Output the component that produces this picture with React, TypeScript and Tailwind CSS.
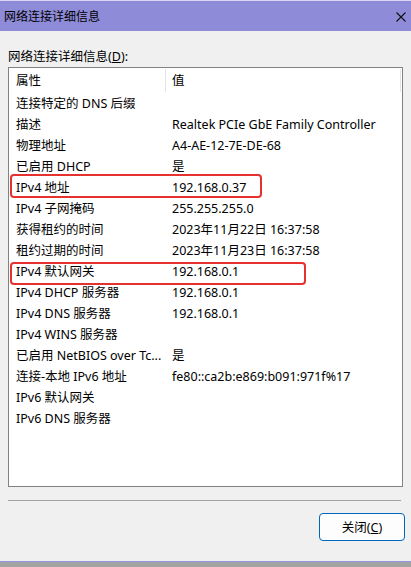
import React from "react";

const rows: [string, string][] = [
  ["连接特定的 DNS 后缀", ""],
  ["描述", "Realtek PCIe GbE Family Controller"],
  ["物理地址", "A4-AE-12-7E-DE-68"],
  ["已启用 DHCP", "是"],
  ["IPv4 地址", "192.168.0.37"],
  ["IPv4 子网掩码", "255.255.255.0"],
  ["获得租约的时间", "2023年11月22日 16:37:58"],
  ["租约过期的时间", "2023年11月23日 16:37:58"],
  ["IPv4 默认网关", "192.168.0.1"],
  ["IPv4 DHCP 服务器", "192.168.0.1"],
  ["IPv4 DNS 服务器", "192.168.0.1"],
  ["IPv4 WINS 服务器", ""],
  ["已启用 NetBIOS over Tc...", "是"],
  ["连接-本地 IPv6 地址", "fe80::ca2b:e869:b091:971f%17"],
  ["IPv6 默认网关", ""],
  ["IPv6 DNS 服务器", ""],
];

export default function App() {
  return (
    <div
      className="w-[411px] h-[567px] bg-[#a3a3a3] text-black text-[12px] overflow-hidden"
      style={{ fontFamily: '"Noto Sans", "Noto Sans CJK SC", sans-serif' }}
    >
      <div className="h-[562px] flex flex-col bg-[#f0f0f0] border-b border-[#9a95e2]">
        {/* title bar */}
        <div className="h-[31px] shrink-0 bg-[#8e8bd8] border-t border-[#d8d6f0] flex items-center justify-between pl-[4px] pr-[5px]">
          <span className="leading-[16px] pt-[2px]">网络连接详细信息</span>
          <svg width="10" height="10" viewBox="0 0 10 10" className="mt-[1px]">
            <path d="M0.5 0.5 L9.5 9.5 M9.5 0.5 L0.5 9.5" stroke="#111" strokeWidth="1.1" />
          </svg>
        </div>

        <div className="flex flex-col px-[8px] pt-[17px]">
          <div className="leading-[16px] h-[19px] pt-[1px] text-[12.5px]">
            网络连接详细信息(<span className="underline">D</span>):
          </div>

          {/* list */}
          <div className="relative w-[395px] h-[420px] bg-white border border-[#828282] text-[12.5px]">
            <div className="flex h-[24px] items-center">
              <div className="w-[157px] h-[23px] pl-[7px] pt-[2px] flex items-center border-r border-[#e5e5e5]">
                属性
              </div>
              <div className="flex-1 h-[23px] pl-[6px] pt-[2px] flex items-center border-r border-[#e5e5e5] mr-[1px]">
                值
              </div>
            </div>
            {rows.map(([k, v], i) => (
              <div key={i} className="flex h-[21px] items-center pt-[3px]">
                <div className="w-[163px] pl-[7px] whitespace-nowrap overflow-hidden">{k}</div>
                <div className="flex-1 whitespace-nowrap">{v}</div>
              </div>
            ))}
            <div className="absolute left-[1px] top-[106px] w-[252px] h-[24px] border-2 border-[#e6322e] rounded-[4px]" />
            <div className="absolute left-[1px] top-[194px] w-[296px] h-[23px] border-2 border-[#e6322e] rounded-[4px]" />
          </div>

          <div className="mt-[13px] w-[393px] h-px bg-[#a0a0a0]" />

          <div className="flex justify-end mt-[12px]">
            <button className="w-[86px] h-[28px] mr-[-2px] pt-[1px] bg-[#fdfdfd] border border-[#0067c0] rounded-[4px] flex items-center justify-center leading-[16px] text-[12.5px]">
              关闭(<span className="underline">C</span>)
            </button>
          </div>
        </div>
      </div>
    </div>
  );
}
